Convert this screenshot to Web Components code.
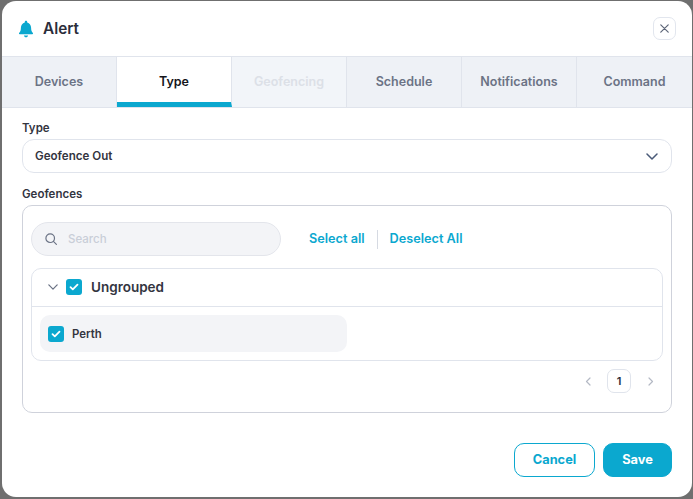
<!DOCTYPE html>
<html>
<head>
<meta charset="utf-8">
<title>Alert</title>
<style>
  html,body{margin:0;padding:0;height:100%;}
  body{background:#6f6f6f;font-family:Inter,"Liberation Sans",sans-serif;overflow:hidden;}
</style>
</head>
<body>
<alert-modal title-text="Alert">
  <tab-bar slot="tabs">
    <tab-item>Devices</tab-item>
    <tab-item active>Type</tab-item>
    <tab-item disabled>Geofencing</tab-item>
    <tab-item>Schedule</tab-item>
    <tab-item>Notifications</tab-item>
    <tab-item>Command</tab-item>
  </tab-bar>
  <field-label class="first">Type</field-label>
  <select-box>Geofence Out</select-box>
  <field-label>Geofences</field-label>
  <geofence-panel>
    <search-row></search-row>
    <geo-group name="Ungrouped">
      <geo-item>Perth</geo-item>
    </geo-group>
    <page-nav></page-nav>
  </geofence-panel>
  <app-button slot="footer" outline>Cancel</app-button>
  <app-button slot="footer">Save</app-button>
</alert-modal>

<script>
const chevron = '<path d="M1 1l5 5 5-5" fill="none" stroke="currentColor" stroke-linecap="round" stroke-linejoin="round"/>';

class AlertModal extends HTMLElement{
    constructor(){
        super();
        this.attachShadow({mode:'open'});
        this.shadowRoot.innerHTML = `
        <style>
            :host{display:flex;flex-direction:column;box-sizing:border-box;width:690px;height:496px;margin:1px 1px 2px 2px;background:#fff;border-radius:14px;overflow:hidden;color:#2b2d3a;}
            header{display:flex;align-items:center;box-sizing:border-box;height:55px;padding:0 16px;flex:none;}
            .bell{width:16px;height:18px;color:#0ba8cf;flex:none;}
            h1{margin:0 0 0 9px;font-size:15.300px;font-weight:600;flex:1;}
            button{box-sizing:border-box;width:23px;height:23px;padding:0;background:#fff;border:1px solid #e2e6ee;border-radius:7px;color:#5d6678;display:flex;align-items:center;justify-content:center;}
            .body{display:block;padding:0 20px;flex:1;}
            footer{display:flex;justify-content:flex-end;gap:8px;padding:0 20px 20px;}
        </style>
        <header>
            <svg class="bell" viewBox="0 0 16 18"><path fill="currentColor" d="M8 .8c.7 0 1.2.5 1.2 1.2v.5c2.4.6 3.9 2.7 3.9 5.2 0 2.8.6 3.9 1.8 5.4.4.5.1 1.2-.6 1.2H1.7c-.7 0-1-.7-.6-1.2C2.300 11.600 2.900 10.500 2.900 7.700c0-2.500 1.500-4.600 3.900-5.200V2C6.800 1.300 7.300.8 8 .8zM5.900 15.400h4.200C9.900 16.500 9 17.200 8 17.200s-1.900-.7-2.100-1.800z"/></svg>
            <h1></h1>
            <button aria-label="Close"><svg width="9" height="9" viewBox="0 0 9 9"><path d="M.8.8l7.400 7.400M8.200.8L.8 8.200" stroke="currentColor" stroke-width="1.200" stroke-linecap="round"/></svg></button>
        </header>
        <slot name="tabs"></slot>
        <div class="body"><slot></slot></div>
        <footer><slot name="footer"></slot></footer>`;
    }
    connectedCallback(){
        this.shadowRoot.querySelector('h1').textContent = this.getAttribute('title-text');
    }
}

class TabBar extends HTMLElement{
    constructor(){
        super();
        this.attachShadow({mode:'open'});
        this.shadowRoot.innerHTML = `
        <style>
            :host{display:grid;grid-template-columns:repeat(6,1fr);box-sizing:border-box;height:52px;background:#eef1f6;border-top:1px solid #e0e4ec;border-bottom:1px solid #e0e4ec;}
        </style>
        <slot></slot>`;
    }
}

class TabItem extends HTMLElement{
    constructor(){
        super();
        this.attachShadow({mode:'open'});
        this.shadowRoot.innerHTML = `
        <style>
            :host{display:flex;align-items:center;justify-content:center;box-sizing:border-box;padding-bottom:1px;border-right:1px solid #e0e4ec;font-size:12.500px;font-weight:600;color:#6b7385;}
            :host(:last-child){border-right:0;}
            :host([active]){background:#fff;color:#14151a;border-bottom:5px solid #0ba8cf;padding:4px 0 0;}
            :host([disabled]){background:#f2f5f9;color:#dce0e7;}
        </style>
        <slot></slot>`;
    }
}

class FieldLabel extends HTMLElement{
    constructor(){
        super();
        this.attachShadow({mode:'open'});
        this.shadowRoot.innerHTML = `
        <style>
            :host{display:block;font-size:11.500px;font-weight:600;line-height:14px;color:#33353f;padding:14px 0 4px;}
            :host(.first){padding:13px 0 4px;}
        </style>
        <slot></slot>`;
    }
}

class SelectBox extends HTMLElement{
    constructor(){
        super();
        this.attachShadow({mode:'open'});
        this.shadowRoot.innerHTML = `
        <style>
            :host{display:flex;align-items:center;justify-content:space-between;box-sizing:border-box;height:34px;padding:0 13px 0 12px;border:1px solid #e0e4ec;border-radius:12px;font-size:11.600px;font-weight:600;color:#33353f;}
            svg{color:#4a5a78;stroke-width:1.500;}
        </style>
        <slot></slot>
        <svg width="12" height="7" viewBox="0 0 12 7">${chevron}</svg>`;
    }
}

class GeofencePanel extends HTMLElement{
    constructor(){
        super();
        this.attachShadow({mode:'open'});
        this.shadowRoot.innerHTML = `
        <style>
            :host{display:block;box-sizing:border-box;height:208px;padding:16px 8px 0;border:1px solid #cfd2db;border-radius:10px;}
        </style>
        <slot></slot>`;
    }
}

class SearchRow extends HTMLElement{
    constructor(){
        super();
        this.attachShadow({mode:'open'});
        this.shadowRoot.innerHTML = `
        <style>
            :host{display:flex;align-items:center;height:34px;}
            .search{display:flex;align-items:center;box-sizing:border-box;width:250px;height:34px;padding-left:13px;background:#f3f4f7;border:1px solid #e3e5eb;border-radius:17px;font-size:11.500px;font-weight:500;color:#c9ced8;}
            .search svg{margin-right:11px;color:#6b7385;}
            a{font-size:12.700px;font-weight:600;color:#0ba8cf;margin-bottom:1px;}
            .all{margin-left:28px;}
            i{width:1px;height:19px;background:#d6dae2;margin:0 12px;}
        </style>
        <div class="search">
            <svg width="12" height="12" viewBox="0 0 12 12" fill="none" stroke="currentColor" stroke-width="1.200" stroke-linecap="round"><circle cx="5.200" cy="5.200" r="4.300"/><path d="M8.400 8.400l3 3"/></svg>
            <span>Search</span>
        </div>
        <a class="all">Select all</a><i></i><a>Deselect All</a>`;
    }
}

class CheckMark extends HTMLElement{
    constructor(){
        super();
        this.attachShadow({mode:'open'});
        this.shadowRoot.innerHTML = `
        <style>
            :host{display:flex;align-items:center;justify-content:center;width:16px;height:16px;flex:none;background:#0ba8cf;border-radius:3px;}
        </style>
        <svg width="10" height="8" viewBox="0 0 10 8"><path d="M1.500 4.200l2.300 2.200 4.700-4.700" fill="none" stroke="#fff" stroke-width="1.800" stroke-linecap="round" stroke-linejoin="round"/></svg>`;
    }
}

class GeoGroup extends HTMLElement{
    constructor(){
        super();
        this.attachShadow({mode:'open'});
        this.shadowRoot.innerHTML = `
        <style>
            :host{display:block;box-sizing:border-box;height:93px;margin-top:12px;border:1px solid #e0e4ec;border-radius:10px;}
            .head{display:flex;align-items:center;box-sizing:border-box;height:38px;padding:0 0 2px 16px;border-bottom:1px solid #e0e4ec;font-size:13.500px;font-weight:600;color:#33353f;}
            .head svg{color:#6b7385;stroke-width:1.500;margin-right:8px;}
            .head span{margin-left:9px;}
            .items{padding:8px;}
        </style>
        <div class="head">
            <svg width="10" height="6" viewBox="0 0 12 7">${chevron}</svg>
            <check-mark></check-mark>
            <span></span>
        </div>
        <div class="items"><slot></slot></div>`;
    }
    connectedCallback(){
        this.shadowRoot.querySelector('span').textContent = this.getAttribute('name');
    }
}

class GeoItem extends HTMLElement{
    constructor(){
        super();
        this.attachShadow({mode:'open'});
        this.shadowRoot.innerHTML = `
        <style>
            :host{display:flex;align-items:center;gap:8px;box-sizing:border-box;width:307px;height:37px;padding-left:8px;background:#f3f4f7;border-radius:10px;font-size:11.400px;font-weight:600;color:#33353f;}
        </style>
        <check-mark></check-mark>
        <slot></slot>`;
    }
}

class PageNav extends HTMLElement{
    constructor(){
        super();
        this.attachShadow({mode:'open'});
        this.shadowRoot.innerHTML = `
        <style>
            :host{display:flex;align-items:center;justify-content:flex-end;height:24px;margin-top:8px;padding-right:9px;color:#b4b9c4;}
            b{display:flex;align-items:center;justify-content:center;box-sizing:border-box;width:24px;height:24px;margin:0 17px 0 16px;border:1px solid #e0e4ec;border-radius:7px;font-size:11px;font-weight:600;color:#2b2d3a;}
        </style>
        <svg width="6" height="9" viewBox="0 0 6 9"><path d="M5 1L1.500 4.500 5 8" fill="none" stroke="currentColor" stroke-width="1.200" stroke-linecap="round" stroke-linejoin="round"/></svg>
        <b>1</b>
        <svg width="6" height="9" viewBox="0 0 6 9"><path d="M1 1l3.500 3.500L1 8" fill="none" stroke="currentColor" stroke-width="1.200" stroke-linecap="round" stroke-linejoin="round"/></svg>`;
    }
}

class AppButton extends HTMLElement{
    constructor(){
        super();
        this.attachShadow({mode:'open'});
        this.shadowRoot.innerHTML = `
        <style>
            :host{display:flex;align-items:center;justify-content:center;box-sizing:border-box;width:69px;height:34px;padding-bottom:1px;background:#0ba8cf;border:1px solid #0ba8cf;border-radius:10px;font-size:12.800px;font-weight:700;color:#fff;}
            :host([outline]){width:81px;background:#fff;color:#0ba8cf;}
        </style>
        <slot></slot>`;
    }
}

customElements.define('alert-modal',AlertModal);
customElements.define('tab-bar',TabBar);
customElements.define('tab-item',TabItem);
customElements.define('field-label',FieldLabel);
customElements.define('select-box',SelectBox);
customElements.define('geofence-panel',GeofencePanel);
customElements.define('search-row',SearchRow);
customElements.define('check-mark',CheckMark);
customElements.define('geo-group',GeoGroup);
customElements.define('geo-item',GeoItem);
customElements.define('page-nav',PageNav);
customElements.define('app-button',AppButton);
</script>
</body>
</html>
